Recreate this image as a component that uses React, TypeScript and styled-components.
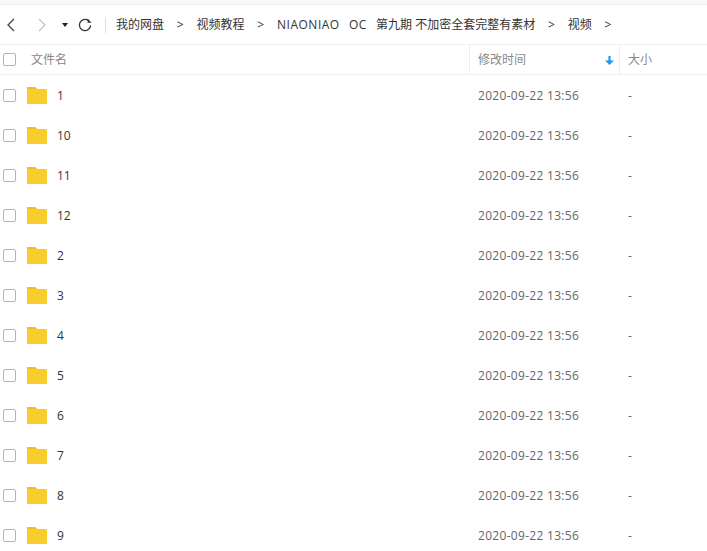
import styled, { createGlobalStyle } from "styled-components";

const GlobalStyle = createGlobalStyle`
    html, body {
        margin: 0;
        height: 100%;
        overflow: hidden;
        background: #fff;
    }
    body {
        font-family: "Noto Sans CJK SC", "Liberation Sans", sans-serif;
    }
`;

const Wrapper = styled.div`
    width: 707px;
    height: 551px;
    overflow: hidden;
    background: #fff;
    font-family: "Open Sans", "Noto Sans CJK SC", sans-serif;
`;

const TopStrip = styled.div`
    height: 4px;
    background: #f9f9fb;
    border-bottom: 1px solid #eeeeee;
`;

const Toolbar = styled.div`
    height: 39px;
    display: flex;
    align-items: center;
    border-bottom: 1px solid #f0f0f0;
`;

const NavButton = styled.button<{ $w: number }>`
    width: ${(p) => p.$w}px;
    height: 100%;
    padding: 0;
    border: 0;
    background: transparent;
    display: flex;
    align-items: center;
    justify-content: center;
    flex-shrink: 0;
`;

const Divider = styled.div`
    width: 1px;
    height: 16px;
    margin: 0 10px 0 4px;
    background: #dddddd;
`;

const Crumbs = styled.div`
    display: flex;
    align-items: center;
    padding-bottom: 1px;
    font-size: 12px;
    color: #333;
    white-space: pre;
`;

const CrumbSep = styled.span`
    display: inline-block;
    width: 32.5px;
    text-align: center;
`;

const Latin = styled.span`
    letter-spacing: 0.5px;
    word-spacing: 1px;
`;

const HeaderRow = styled.div`
    height: 29px;
    display: grid;
    grid-template-columns: 469px 150px 1fr;
    align-items: stretch;
    border-bottom: 1px solid #f0f0f0;
    font-size: 12px;
    color: #888;
`;

const NameHead = styled.div`
    display: flex;
    align-items: center;
    padding-left: 3px;
    gap: 15px;
`;

const HeadLabel = styled.span`
    padding-bottom: 1px;
`;

const SideHead = styled.div`
    position: relative;
    display: flex;
    align-items: center;
    padding-left: 8px;
    border-left: 1px solid #eeeeee;
`;

const SortArrow = styled.svg`
    position: absolute;
    right: 5px;
    top: 11px;
`;

const Row = styled.div`
    height: 40px;
    display: grid;
    grid-template-columns: 469px 150px 1fr;
    align-items: center;
    font-size: 12px;
`;

const NameCell = styled.div`
    display: flex;
    align-items: center;
    padding-left: 3px;
    color: #333;
`;

const Check = styled.span`
    width: 11px;
    height: 11px;
    border: 1px solid #b4b4b4;
    border-radius: 2px;
    flex-shrink: 0;
`;

const Folder = styled.svg`
    margin-left: 11px;
    margin-right: 10px;
    flex-shrink: 0;
`;

const DateCell = styled.div`
    padding-left: 9px;
    color: #666;
    letter-spacing: 0.3px;
`;

const SizeCell = styled.div`
    padding-left: 9px;
    color: #666;
`;

const folders = ["1", "10", "11", "12", "2", "3", "4", "5", "6", "7", "8", "9"];

export default function App() {
    return (
        <Wrapper>
            <GlobalStyle />
            <TopStrip />
            <Toolbar>
                <NavButton $w={22} aria-label="back">
                    <svg width="10" height="14" viewBox="0 0 10 14" fill="none" stroke="#444" strokeWidth="1.3">
                        <path d="M8 1L2 7l6 6" />
                    </svg>
                </NavButton>
                <NavButton $w={40} aria-label="forward">
                    <svg width="10" height="14" viewBox="0 0 10 14" fill="none" stroke="#c4c4c4" strokeWidth="1.3">
                        <path d="M2 1l6 6-6 6" />
                    </svg>
                </NavButton>
                <NavButton $w={6} aria-label="history">
                    <svg width="6" height="4" viewBox="0 0 6 4" fill="#222">
                        <path d="M0 0h6L3 4z" />
                    </svg>
                </NavButton>
                <NavButton $w={33} aria-label="refresh">
                    <svg width="14" height="14" viewBox="0 0 14 14" fill="none" stroke="#333" strokeWidth="1.3">
                        <path d="M12.6 7.4A5.6 5.6 0 1 1 10.2 2.4" />
                        <path d="M9.6 0.6v4.2h4z" fill="#333" stroke="none" />
                    </svg>
                </NavButton>
                <Divider />
                <Crumbs>
                    <span>我的网盘</span>
                    <CrumbSep>{">"}</CrumbSep>
                    <span>视频教程</span>
                    <CrumbSep>{">"}</CrumbSep>
                    <span>
                        <Latin>NIAONIAO  OC  </Latin>第九期 不加密全套完整有素材
                    </span>
                    <CrumbSep>{">"}</CrumbSep>
                    <span>视频</span>
                    <CrumbSep>{">"}</CrumbSep>
                </Crumbs>
            </Toolbar>
            <HeaderRow>
                <NameHead>
                    <Check />
                    <HeadLabel>文件名</HeadLabel>
                </NameHead>
                <SideHead>
                    <HeadLabel>修改时间</HeadLabel>
                    <SortArrow width="9" height="9" viewBox="0 0 9 9" fill="#1a9cf0">
                        <path d="M3.4 0h2.2v4.6H9L4.5 9 0 4.6h3.4z" />
                    </SortArrow>
                </SideHead>
                <SideHead>
                    <HeadLabel>大小</HeadLabel>
                </SideHead>
            </HeaderRow>
            {folders.map((name) => (
                <Row key={name}>
                    <NameCell>
                        <Check />
                        <Folder width="20" height="17" viewBox="0 0 20 17">
                            <path d="M1 0h7l2 2h9a1 1 0 0 1 1 1v13a1 1 0 0 1-1 1H1a1 1 0 0 1-1-1V1a1 1 0 0 1 1-1z" fill="#f9cd2d" />
                            <path d="M1 0h7l2 2H0V1a1 1 0 0 1 1-1z" fill="#efbd1e" />
                        </Folder>
                        {name}
                    </NameCell>
                    <DateCell>2020-09-22 13:56</DateCell>
                    <SizeCell>-</SizeCell>
                </Row>
            ))}
        </Wrapper>
    );
}
